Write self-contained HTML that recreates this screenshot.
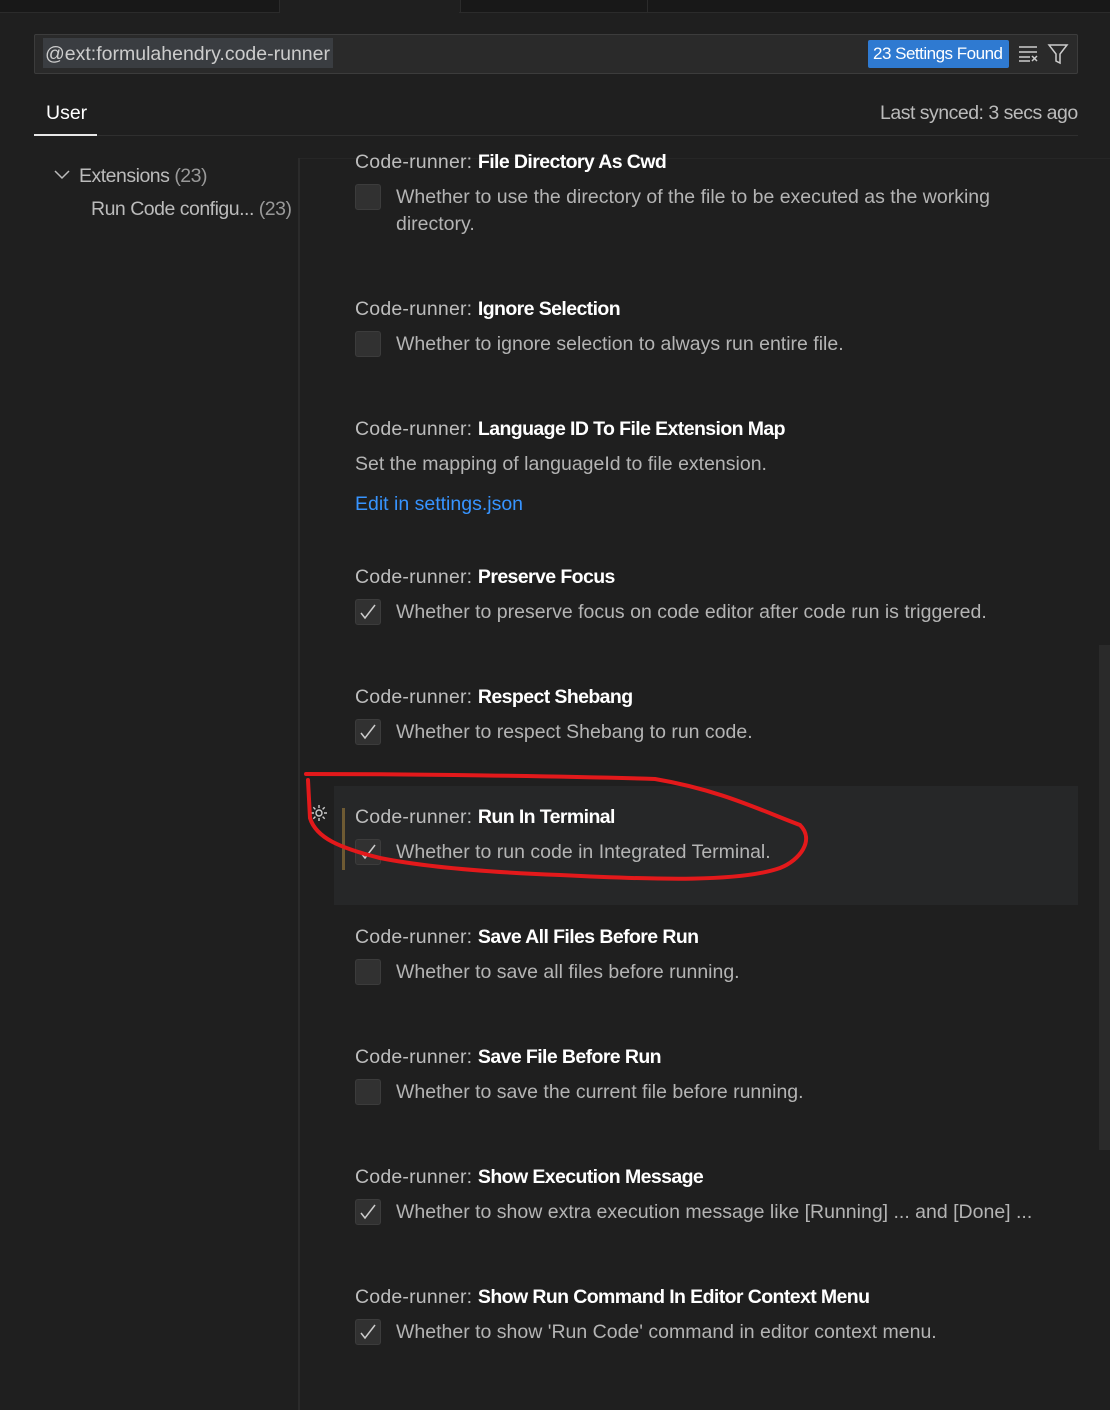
<!DOCTYPE html>
<html><head><style>
body{margin:0;width:1110px;height:1410px;background:#1f1f1f;overflow:hidden;font-family:"Liberation Sans",sans-serif;color:#ccc;position:relative}
.a{position:absolute;white-space:nowrap}
.t{font-size:19.5px;color:#bdbdbd;letter-spacing:0.2px}
.t b{color:#fff;font-weight:bold;letter-spacing:-0.6px}
.d{font-size:19.5px;color:#b4b4b4;letter-spacing:0px}
.cb{position:absolute;width:24px;height:24px;border:1px solid #3c3c3c;background:#313131;border-radius:3px;left:355px}
.cb svg{position:absolute;left:3px;top:3px}
</style></head><body>
<div class="a" style="left:0;top:0;width:1110px;height:12px;background:#181818"></div>
<div class="a" style="left:279px;top:0;width:180px;height:13px;background:#1f1f1f;border-left:1px solid #2b2b2b;border-right:1px solid #2b2b2b"></div>
<div class="a" style="left:647px;top:0;width:1px;height:12px;background:#2b2b2b"></div>
<div class="a" style="left:0;top:12px;width:279px;height:1px;background:#2b2b2b"></div>
<div class="a" style="left:459px;top:12px;width:651px;height:1px;background:#2b2b2b"></div>

<div class="a" style="left:34px;top:34px;width:1042px;height:38px;background:#2a2a2a;border:1px solid #3c3c3c;border-radius:2px"></div>
<div class="a" style="left:43px;top:38px;width:290px;height:30px;background:#3a3d41"></div>
<div class="a" style="left:45px;top:43px;font-size:19.5px;color:#ccc;letter-spacing:0px">@ext:formulahendry.code-runner</div>
<div class="a" style="left:868px;top:40px;width:141px;height:28px;background:#2f7ad1;border-radius:2px"></div>
<div class="a" style="left:873px;top:44px;font-size:17px;color:#fff;letter-spacing:-0.5px">23 Settings Found</div>
<svg class="a" style="left:1017px;top:44px" width="24" height="20" viewBox="0 0 24 20" fill="none" stroke="#ccc" stroke-width="1.5"><path d="M2 3h18M2 8h18M2 13h11M2 17h11M15 12l5 5M20 12l-5 5"/></svg>
<svg class="a" style="left:1047px;top:43px" width="22" height="22" viewBox="0 0 22 22" fill="none" stroke="#ccc" stroke-width="1.5"><path d="M2 2h18l-7 9v9l-4-2v-7z"/></svg>

<div class="a" style="left:46px;top:102px;font-size:19.5px;color:#fff">User</div>
<div class="a" style="left:880px;top:102px;font-size:19.5px;color:#bbb;letter-spacing:-0.5px">Last synced: 3 secs ago</div>
<div class="a" style="left:34px;top:135px;width:1044px;height:1px;background:#2f2f2f"></div>
<div class="a" style="left:34px;top:134px;width:63px;height:2px;background:#e7e7e7"></div>

<svg class="a" style="left:54px;top:169px" width="16" height="12" viewBox="0 0 16 12" fill="none" stroke="#bbb" stroke-width="1.5"><path d="M1 2l7 7 7-7"/></svg>
<div class="a" style="left:79px;top:165px;font-size:19.5px;color:#bbb;letter-spacing:-0.5px">Extensions <span style="color:#999">(23)</span></div>
<div class="a" style="left:91px;top:198px;font-size:19.5px;color:#bbb;letter-spacing:-0.5px">Run Code configu... <span style="color:#999">(23)</span></div>
<div class="a" style="left:298px;top:158px;width:2px;height:1252px;background:#2b2b2b"></div>
<div class="a" style="left:300px;top:158px;width:810px;height:1px;background:#262626"></div>
<div class="a" style="left:1099px;top:645px;width:11px;height:505px;background:#2a2a2a"></div>

<div class="a" style="left:334px;top:786px;width:744px;height:119px;background:#262728"></div>
<div class="a" style="left:342px;top:808px;width:3px;height:62px;background:#6e5a33"></div>

<div class="a t" style="left:355px;top:151px">Code-runner: <b>File Directory As Cwd</b></div>
<div class="cb" style="top:184px"></div>
<div class="a d" style="left:396px;top:186px">Whether to use the directory of the file to be executed as the working</div>
<div class="a d" style="left:396px;top:213px">directory.</div>

<div class="a t" style="left:355px;top:298px">Code-runner: <b>Ignore Selection</b></div>
<div class="cb" style="top:331px"></div>
<div class="a d" style="left:396px;top:333px">Whether to ignore selection to always run entire file.</div>

<div class="a t" style="left:355px;top:418px">Code-runner: <b>Language ID To File Extension Map</b></div>
<div class="a d" style="left:355px;top:453px">Set the mapping of languageId to file extension.</div>
<div class="a d" style="left:355px;top:493px;color:#3794ff">Edit in settings.json</div>

<div class="a t" style="left:355px;top:566px">Code-runner: <b>Preserve Focus</b></div>
<div class="cb" style="top:599px"><svg width="18" height="18" viewBox="0 0 18 18" fill="none" stroke="#ccc" stroke-width="1.5"><path d="M2 10l4 5 10-13"/></svg></div>
<div class="a d" style="left:396px;top:601px">Whether to preserve focus on code editor after code run is triggered.</div>

<div class="a t" style="left:355px;top:686px">Code-runner: <b>Respect Shebang</b></div>
<div class="cb" style="top:719px"><svg width="18" height="18" viewBox="0 0 18 18" fill="none" stroke="#ccc" stroke-width="1.5"><path d="M2 10l4 5 10-13"/></svg></div>
<div class="a d" style="left:396px;top:721px">Whether to respect Shebang to run code.</div>

<svg class="a" style="left:309px;top:803px" width="20" height="20" viewBox="0 0 20 20" fill="none" stroke="#ccc" stroke-width="1.4"><circle cx="10" cy="10" r="3"/><path d="M10 2v3M10 15v3M2 10h3M15 10h3M4.3 4.3l2.1 2.1M13.6 13.6l2.1 2.1M4.3 15.7l2.1-2.1M13.6 6.4l2.1-2.1"/></svg>
<div class="a t" style="left:355px;top:806px">Code-runner: <b>Run In Terminal</b></div>
<div class="cb" style="top:839px"><svg width="18" height="18" viewBox="0 0 18 18" fill="none" stroke="#ccc" stroke-width="1.5"><path d="M2 10l4 5 10-13"/></svg></div>
<div class="a d" style="left:396px;top:841px">Whether to run code in Integrated Terminal.</div>

<div class="a t" style="left:355px;top:926px">Code-runner: <b>Save All Files Before Run</b></div>
<div class="cb" style="top:959px"></div>
<div class="a d" style="left:396px;top:961px">Whether to save all files before running.</div>

<div class="a t" style="left:355px;top:1046px">Code-runner: <b>Save File Before Run</b></div>
<div class="cb" style="top:1079px"></div>
<div class="a d" style="left:396px;top:1081px">Whether to save the current file before running.</div>

<div class="a t" style="left:355px;top:1166px">Code-runner: <b>Show Execution Message</b></div>
<div class="cb" style="top:1199px"><svg width="18" height="18" viewBox="0 0 18 18" fill="none" stroke="#ccc" stroke-width="1.5"><path d="M2 10l4 5 10-13"/></svg></div>
<div class="a d" style="left:396px;top:1201px">Whether to show extra execution message like [Running] ... and [Done] ...</div>

<div class="a t" style="left:355px;top:1286px">Code-runner: <b>Show Run Command In Editor Context Menu</b></div>
<div class="cb" style="top:1319px"><svg width="18" height="18" viewBox="0 0 18 18" fill="none" stroke="#ccc" stroke-width="1.5"><path d="M2 10l4 5 10-13"/></svg></div>
<div class="a d" style="left:396px;top:1321px">Whether to show 'Run Code' command in editor context menu.</div>

<svg class="a" style="left:0;top:0" width="1110" height="1410" fill="none" stroke="#e3191b" stroke-width="4" stroke-linecap="round"><path d="M306 774C400 774 560 776 655 779C720 790 760 810 800 825C815 840 800 860 780 868C740 882 660 880 560 875C480 872 420 866 380 858C340 848 316 838 310 818L308 780"/></svg>
</body></html>
